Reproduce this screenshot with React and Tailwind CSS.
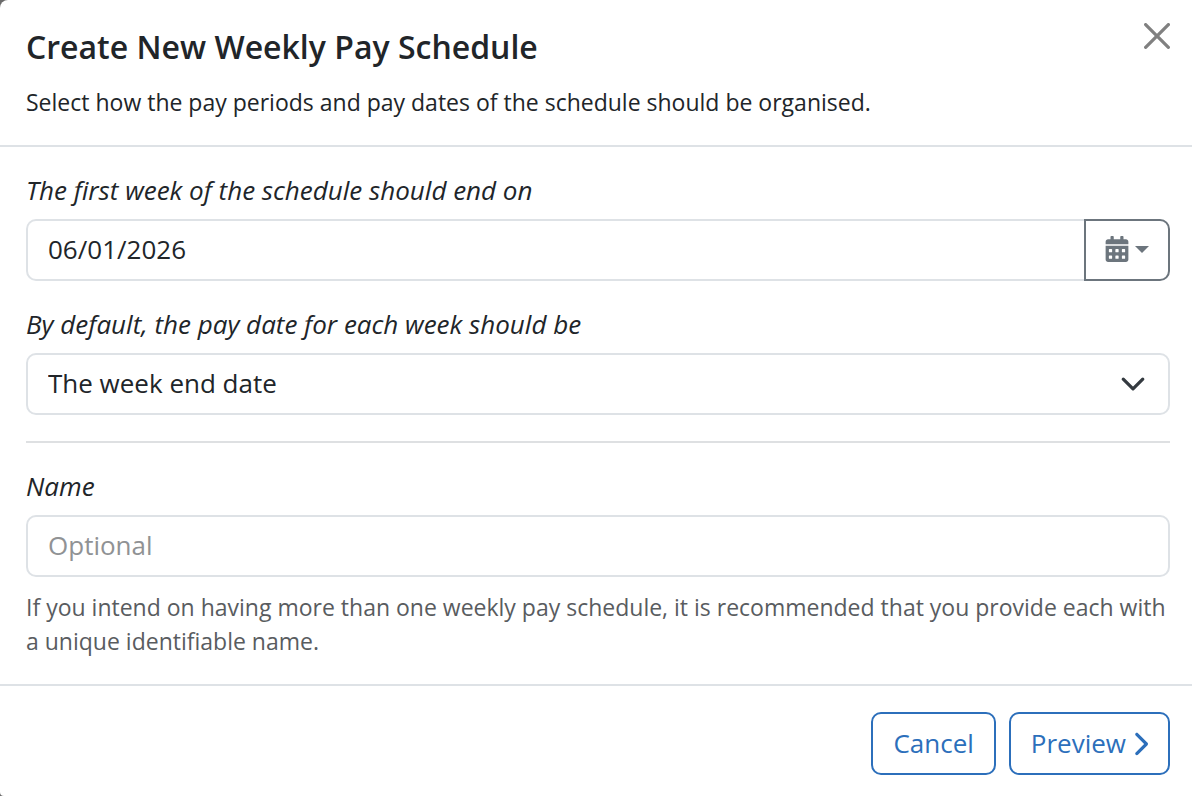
import React, { useState } from 'react';
import { FaCalendarAlt } from 'react-icons/fa';
import { FaChevronRight } from 'react-icons/fa6';

const LABEL = 'block text-[26px] leading-[34px] italic mb-3';
const FIELD = 'w-full h-[62px] px-5 pb-[2px] text-[26px] bg-white border-2 border-[#dee2e6] text-[#212529] placeholder:text-[#909294] outline-none';
const BUTTON = 'flex items-center h-[63px] px-5 text-[26px] rounded-[10px] border-2 border-[#2c6fbb] text-[#2c6fbb] bg-white';

function CloseIcon() {
  return (
    <svg viewBox="0 0 16 16" className="w-[26px] h-[26px]" fill="currentColor" aria-hidden="true">
      <path d="M.293.293a1 1 0 0 1 1.414 0L8 6.586 14.293.293a1 1 0 1 1 1.414 1.414L9.414 8l6.293 6.293a1 1 0 0 1-1.414 1.414L8 9.414l-6.293 6.293a1 1 0 0 1-1.414-1.414L6.586 8 .293 1.707a1 1 0 0 1 0-1.414z" />
    </svg>
  );
}

function SelectArrow() {
  return (
    <svg
      viewBox="0 0 16 16"
      className="absolute right-6 top-[18px] w-[26px] h-[26px] pointer-events-none"
      fill="none"
      stroke="#343a40"
      strokeWidth="2"
      strokeLinecap="round"
      strokeLinejoin="round"
      aria-hidden="true"
    >
      <path d="m2 5 6 6 6-6" />
    </svg>
  );
}

function App() {
  const [endDate, setEndDate] = useState('06/01/2026');
  const [payDate, setPayDate] = useState('end');
  const [name, setName]       = useState('');

  return (
    <div className="bg-[#6b6b6b] font-['Open_Sans',sans-serif] text-[#212529]">
      <div role="dialog" aria-labelledby="title" className="bg-white rounded-tl-[8px] rounded-bl-[4px]">
        {/* Header */}
        <header className="flex items-start justify-between pl-[26px] pr-[22px] pt-[22px] pb-[26px] border-b-2 border-[#dee2e6]">
          <div>
            <h1 id="title" className="text-[32px] leading-[50px] font-semibold">Create New Weekly Pay Schedule</h1>
            <p className="text-[23px] leading-[34px] mt-[13px]">
              Select how the pay periods and pay dates of the schedule should be organised.
            </p>
          </div>
          <button type="button" aria-label="Close" className="mt-px text-[#808080]">
            <CloseIcon />
          </button>
        </header>

        {/* Body */}
        <main className="p-[26px] pr-[22px]">
          <label htmlFor="end-date" className={LABEL}>The first week of the schedule should end on</label>
          <div className="flex">
            <input
              id="end-date"
              type="text"
              value={endDate}
              onChange={(e) => setEndDate(e.target.value)}
              className={`${FIELD} flex-1 min-w-0 rounded-l-[10px] border-r-0`}
            />
            <button
              type="button"
              aria-label="Choose date"
              className="flex items-center justify-center gap-[6px] w-[86px] h-[62px] pb-[2px] shrink-0 rounded-r-[10px] border-2 border-[#6c757d] text-[#6c757d]"
            >
              <FaCalendarAlt className="w-6 h-[26px]" />
              <svg viewBox="0 0 14 7" className="w-[14px] h-[7px]" fill="currentColor" aria-hidden="true">
                <path d="M0 0h14L7 7z" />
              </svg>
            </button>
          </div>

          <label htmlFor="pay-date" className={`${LABEL} mt-[26px]`}>By default, the pay date for each week should be</label>
          <div className="relative">
            <select
              id="pay-date"
              value={payDate}
              onChange={(e) => setPayDate(e.target.value)}
              className={`${FIELD} appearance-none rounded-[10px]`}
            >
              <option value="end">The week end date</option>
            </select>
            <SelectArrow />
          </div>

          <hr className="my-[26px] border-t-2 border-[#dee0e2]" />

          <label htmlFor="name" className={LABEL}>Name</label>
          <input
            id="name"
            type="text"
            placeholder="Optional"
            value={name}
            onChange={(e) => setName(e.target.value)}
            aria-describedby="name-help"
            className={`${FIELD} block rounded-[10px]`}
          />
          <p id="name-help" className="mt-[13px] text-[23px] leading-[34px] text-[#595c5f]">
            If you intend on having more than one weekly pay schedule, it is recommended that you provide each with a unique identifiable name.
          </p>
        </main>

        {/* Footer */}
        <footer className="flex justify-end gap-[13px] pt-[26px] pb-[21px] pr-[22px] border-t-2 border-[#dee2e6]">
          <button type="button" className={BUTTON}>Cancel</button>
          <button type="button" className={`${BUTTON} gap-[6px]`}>
            Preview
            <FaChevronRight className="w-4 h-[26px]" />
          </button>
        </footer>
      </div>
    </div>
  );
}

export default App;
